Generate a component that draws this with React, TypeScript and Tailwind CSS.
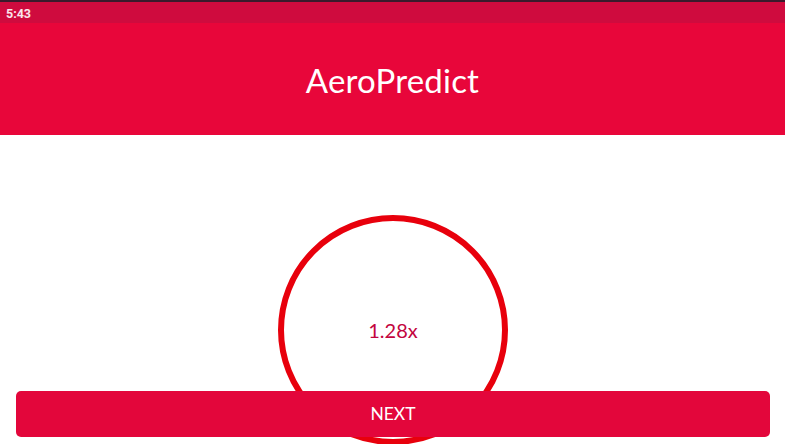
// Layar utama AeroPredict: header merah, lingkaran multiplier, tombol NEXT di bawah

const FONT = { fontFamily: 'Lato, "Open Sans", sans-serif' }

function StatusBar() {
  return (
    <div className="flex h-[23px] items-center border-t-2 border-[#3a1a2c] bg-[#cf0b3e] px-[6px] pt-[3px]">
      <span className="font-['Roboto',sans-serif] text-[12.5px] font-bold text-white/90">5:43</span>
    </div>
  )
}

function Header() {
  return (
    <div className="flex h-[112px] items-center justify-center bg-[#e8063a] pt-[4px]">
      <h1 className="text-[33px] font-normal tracking-[0.2px] text-white" style={FONT}>
        AeroPredict
      </h1>
    </div>
  )
}

export default function App() {
  return (
    <div className="relative h-[444px] w-[785px] overflow-hidden bg-white" style={FONT}>
      <StatusBar />
      <Header />

      {/* Lingkaran multiplier */}
      <div className="flex justify-center pt-[80px] pl-[1px]">
        <div className="flex h-[230px] w-[230px] shrink-0 items-center justify-center rounded-full border-[6px] border-[#e8000c]">
          <span className="text-[20px] text-[#c3053f]">1.28x</span>
        </div>
      </div>

      {/* Tombol NEXT — nutupin bagian bawah lingkaran */}
      <button className="absolute left-[16px] top-[391px] flex h-[46px] w-[754px] items-center justify-center rounded-[5px] bg-[#e3063b] text-[17.5px] text-white">
        NEXT
      </button>
    </div>
  )
}
